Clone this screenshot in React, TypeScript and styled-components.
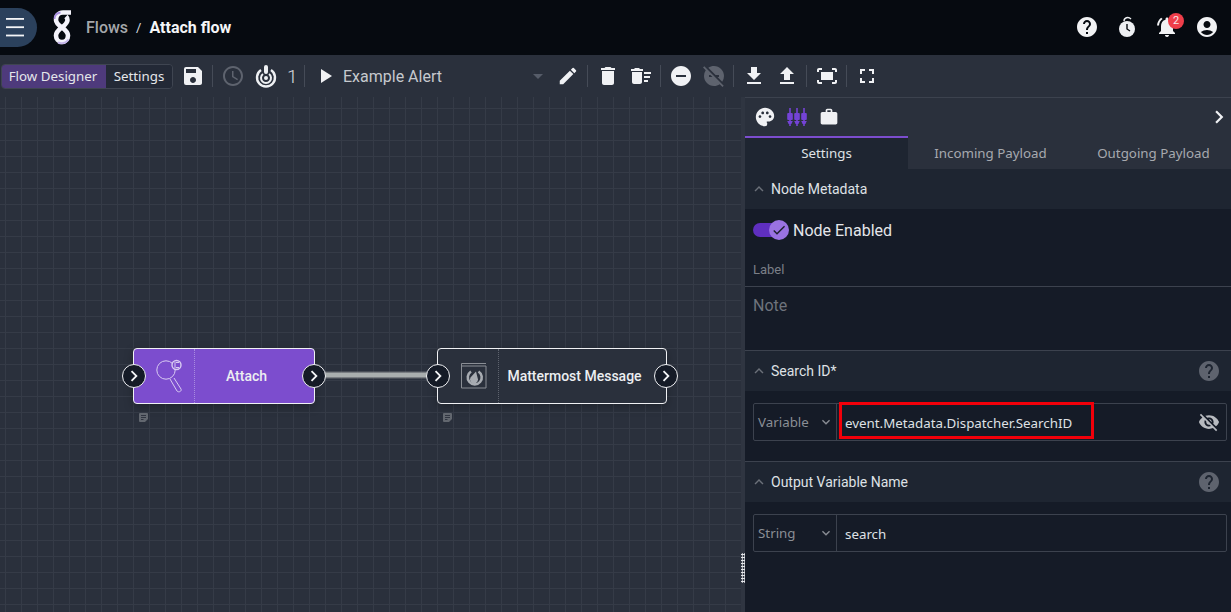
import styled, { createGlobalStyle } from "styled-components";
import {
  MdAccessTime,
  MdAccountCircle,
  MdDelete,
  MdDeleteSweep,
  MdEdit,
  MdFileDownload,
  MdFileUpload,
  MdFitScreen,
  MdFullscreen,
  MdHelp,
  MdKeyboardArrowDown,
  MdKeyboardArrowUp,
  MdNotificationsActive,
  MdPalette,
  MdPlayArrow,
  MdRemoveCircle,
  MdSave,
  MdVisibilityOff,
  MdWork,
  MdChevronRight,
  MdArrowDropDown,
  MdDoNotDisturbOff,
  MdCheck,
} from "react-icons/md";

const GlobalStyle = createGlobalStyle`
  html, body {
    margin: 0;
    height: 100%;
    background: #151b27;
    overflow: hidden;
  }
  body {
    font-family: "Roboto", "Liberation Sans", sans-serif;
    color: #eef0f3;
  }
  #root {
    height: 100%;
  }
`;

function MenuIcon() {
  return (
    <svg width="18" height="19" viewBox="0 0 18 19" fill="#f4f5f7">
      <rect y="0" width="18" height="1.8" />
      <rect y="8.3" width="18" height="1.8" />
      <rect y="16.6" width="18" height="1.8" />
    </svg>
  );
}

function Logo() {
  return (
    <svg width="20" height="36" viewBox="0 0 20 36" fill="none">
      <path
        d="M19 3.5h-8C6.5 3.5 4 7 4 11c0 6.5 12 8.500 12 15.500 0 3.500-2.500 6.500-6 6.500s-6-3-6-6.500C4 19.500 15.500 17.500 15.500 11c0-1.500-.5-2.500-1.500-3.500"
        stroke="#f4f3fb"
        strokeWidth="4.6"
      />
      <path d="M2.500 10c0-3.500 2.500-6 6-6.500" stroke="#a991e0" strokeWidth="1.800" />
      <path d="M6 33.500c4 1.500 8 .5 10.500-3" stroke="#c4b5ea" strokeWidth="2" />
    </svg>
  );
}

function TimerIcon() {
  return (
    <svg width="20" height="24" viewBox="0 0 20 24" fill="none">
      <path d="M7 6c0-3 4-5 7-2" stroke="#eef0f3" strokeWidth="1.4" />
      <circle cx="10" cy="14" r="8" fill="#eef0f3" />
      <path d="M10 9v5l3 2" stroke="#060a10" strokeWidth="1.4" />
    </svg>
  );
}

function TargetIcon() {
  return (
    <svg width="22" height="24" viewBox="0 0 22 24" fill="none">
      <path d="M6 6a9 9 0 1 0 10 0" stroke="#eef0f3" strokeWidth="2.4" />
      <path d="M8 10a5 5 0 1 0 6 0" stroke="#eef0f3" strokeWidth="2" />
      <circle cx="11" cy="14" r="2" fill="#eef0f3" />
      <rect x="9" y="1" width="4" height="9" rx="2" fill="#eef0f3" />
    </svg>
  );
}

function SlidersIcon() {
  return (
    <svg width="20" height="20" viewBox="0 0 20 20" fill="#7443d6">
      {[3, 10, 17].map((x) => (
        <g key={x}>
          <rect x={x - 0.8} y="1" width="1.6" height="18" />
          <rect x={x - 2.8} y="6" width="5.6" height="7" rx="1" />
          <path d={`M${x - 2.8} 14h5.6l-1.4 3h-2.8z`} />
        </g>
      ))}
    </svg>
  );
}

function AttachIcon() {
  return (
    <svg width="28" height="34" viewBox="0 0 28 34" fill="none" stroke="#d9ccf2" strokeWidth="1">
      <circle cx="10" cy="11" r="9.2" />
      <path d="M14 20l7 12c2 2 5 0 4-2l-7-11" />
      <circle cx="20.5" cy="6" r="4.5" fill="#7c4dce" strokeWidth="1.4" />
      <path d="M19 3v6M23 3.5h-3M23 8.5h-3" />
    </svg>
  );
}

function MattermostIcon() {
  return (
    <svg width="26" height="26" viewBox="0 0 26 26" fill="none">
      <path d="M25 .5H.5V25H25V3M1 3h24" stroke="#8a8e95" />
      <path d="M10 8.5a7 7 0 1 0 7.5 0" stroke="#a8acb2" strokeWidth="2.6" />
      <path d="M9.5 14.5a4 4 0 1 0 7 0L15 8.5z" fill="#a8acb2" />
    </svg>
  );
}

function NoteIcon() {
  return (
    <svg width="9" height="9" viewBox="0 0 9 9">
      <path d="M1 0h7a1 1 0 0 1 1 1v5L6 9H1a1 1 0 0 1-1-1V1a1 1 0 0 1 1-1z" fill="#62676f" />
      <path d="M2 2.500h5M2 4.500h5M2 6.500h2.500" stroke="#2a303c" strokeWidth="0.9" />
    </svg>
  );
}

function Port({ side }: { side: "left" | "right" }) {
  return (
    <PortDot $side={side}>
      <MdChevronRight size={22} />
    </PortDot>
  );
}

function Section({ title, help }: { title: string; help?: boolean }) {
  return (
    <SectionHeader>
      <MdKeyboardArrowUp size={18} color="#6b7079" />
      <SectionTitle>{title}</SectionTitle>
      {help && <HelpIcon size={24} />}
    </SectionHeader>
  );
}

export default function App() {
  return (
    <Page>
      <GlobalStyle />
      <TopBar>
        <MenuPill>
          <MenuIcon />
        </MenuPill>
        <LogoBox>
          <Logo />
        </LogoBox>
        <Crumb>Flows</Crumb>
        <CrumbSep>/</CrumbSep>
        <CrumbCurrent>Attach flow</CrumbCurrent>
        <TopActions>
          <TopIcon>
            <MdHelp size={24} />
          </TopIcon>
          <TopIcon>
            <TimerIcon />
          </TopIcon>
          <TopIcon>
            <MdNotificationsActive size={24} />
            <Badge>2</Badge>
          </TopIcon>
          <TopIcon>
            <MdAccountCircle size={24} />
          </TopIcon>
        </TopActions>
      </TopBar>

      <Toolbar>
        <ModeGroup>
          <ModeButton $active>Flow Designer</ModeButton>
          <ModeButton>Settings</ModeButton>
        </ModeGroup>
        <SaveButton>
          <MdSave size={24} />
        </SaveButton>
        <ToolSep />
        <ToolButton $dim>
          <MdAccessTime size={24} />
        </ToolButton>
        <ToolButton>
          <TargetIcon />
        </ToolButton>
        <RunCount>1</RunCount>
        <ToolSep />
        <FlowSelect>
          <MdPlayArrow size={24} />
          <FlowName>Example Alert</FlowName>
          <MdArrowDropDown size={24} color="#565c69" />
        </FlowSelect>
        <ToolButton>
          <MdEdit size={22} />
        </ToolButton>
        <ToolSep />
        <ToolButton>
          <MdDelete size={24} />
        </ToolButton>
        <ToolButton>
          <MdDeleteSweep size={24} />
        </ToolButton>
        <ToolSep />
        <ToolButton>
          <MdRemoveCircle size={24} />
        </ToolButton>
        <ToolButton $dim>
          <MdDoNotDisturbOff size={24} />
        </ToolButton>
        <ToolSep />
        <ToolButton>
          <MdFileDownload size={24} />
        </ToolButton>
        <ToolButton>
          <MdFileUpload size={24} />
        </ToolButton>
        <ToolSep />
        <ToolButton>
          <MdFitScreen size={24} />
        </ToolButton>
        <ToolSep />
        <ToolButton>
          <MdFullscreen size={24} />
        </ToolButton>
      </Toolbar>

      <Workspace>
        <Canvas>
          <Edge viewBox="0 0 102 12" width="102" height="12">
            <rect x="0" y="2" width="102" height="8" fill="#6c7176" opacity="0.45" />
            <rect x="0" y="3.5" width="102" height="5" fill="#a9aeae" />
          </Edge>
          <Node $x={133} $w={182} $purple>
            <NodeIcon $purple>
              <AttachIcon />
            </NodeIcon>
            <NodeLabel>Attach</NodeLabel>
            <Port side="left" />
            <Port side="right" />
            <NoteMark>
              <NoteIcon />
            </NoteMark>
          </Node>
          <Node $x={437} $w={230}>
            <NodeIcon>
              <MattermostIcon />
            </NodeIcon>
            <NodeLabel>Mattermost Message</NodeLabel>
            <Port side="left" />
            <Port side="right" />
            <NoteMark>
              <NoteIcon />
            </NoteMark>
          </Node>
        </Canvas>

        <Splitter>
          <Grip />
        </Splitter>

        <Panel>
          <PanelIcons>
            <PanelIcon>
              <MdPalette size={22} />
            </PanelIcon>
            <PanelIcon>
              <SlidersIcon />
            </PanelIcon>
            <PanelIcon>
              <MdWork size={20} />
            </PanelIcon>
            <PanelCollapse>
              <MdChevronRight size={26} />
            </PanelCollapse>
          </PanelIcons>
          <Tabs>
            <Tab $active>Settings</Tab>
            <Tab>Incoming Payload</Tab>
            <Tab>Outgoing Payload</Tab>
          </Tabs>

          <Section title="Node Metadata" />
          <EnabledRow>
            <Toggle>
              <ToggleKnob>
                <MdCheck size={16} />
              </ToggleKnob>
            </Toggle>
            <EnabledText>Node Enabled</EnabledText>
          </EnabledRow>
          <LabelField>Label</LabelField>
          <NoteField>Note</NoteField>

          <Section title="Search ID*" help />
          <SectionBody>
            <InputRow>
              <TypeSelect>
                Variable
                <MdKeyboardArrowDown size={16} />
              </TypeSelect>
              <ValueText>event.Metadata.Dispatcher.SearchID</ValueText>
              <Highlight />
              <EyeIcon>
                <MdVisibilityOff size={22} />
              </EyeIcon>
            </InputRow>
          </SectionBody>

          <Section title="Output Variable Name" help />
          <SectionBody>
            <InputRow>
              <TypeSelect>
                String
                <MdKeyboardArrowDown size={16} />
              </TypeSelect>
              <ValueText>search</ValueText>
            </InputRow>
          </SectionBody>
        </Panel>
      </Workspace>
    </Page>
  );
}

const Page = styled.div`
  display: flex;
  flex-direction: column;
  height: 612px;
  width: 1231px;
  overflow: hidden;
`;

const TopBar = styled.header`
  height: 55px;
  flex: none;
  box-sizing: border-box;
  padding-bottom: 1px;
  display: flex;
  align-items: center;
  background: #060a10;
`;

const MenuPill = styled.div`
  width: 37px;
  height: 39px;
  border-radius: 0 20px 20px 0;
  background: #2b415c;
  display: flex;
  align-items: center;
  justify-content: flex-start;
  padding-left: 6px;
  box-sizing: border-box;
`;

const LogoBox = styled.div`
  width: 20px;
  height: 36px;
  margin-left: 15px;
  margin-right: 14px;
`;

const Crumb = styled.span`
  font-size: 16px;
  color: #a4a7ab;
  font-weight: 500;
`;

const CrumbSep = styled.span`
  font-size: 13px;
  margin: 0 8px;
  color: #dfe1e4;
`;

const CrumbCurrent = styled.span`
  font-size: 16px;
  font-weight: 700;
  color: #f4f5f7;
`;

const TopActions = styled.div`
  margin-left: auto;
  margin-right: 4px;
  display: flex;
`;

const TopIcon = styled.div`
  position: relative;
  width: 40px;
  height: 40px;
  display: flex;
  align-items: center;
  justify-content: center;
  color: #f1f2f4;
`;

const Badge = styled.span`
  position: absolute;
  top: 6px;
  right: 3px;
  width: 16px;
  height: 16px;
  border-radius: 50%;
  background: #ef3e4a;
  color: #f8e8ea;
  font-size: 11px;
  line-height: 16px;
  text-align: center;
`;

const Toolbar = styled.div`
  height: 42px;
  flex: none;
  box-sizing: border-box;
  padding-left: 1px;
  display: flex;
  align-items: center;
  background: #2a303c;
`;

const ModeGroup = styled.div`
  display: flex;
  width: 172px;
  height: 25px;
  box-sizing: border-box;
  border: 1px solid #3f4551;
  border-radius: 4px;
  overflow: hidden;
  flex: none;
`;

const ModeButton = styled.div<{ $active?: boolean }>`
  flex: ${(p) => (p.$active ? "0 0 104px" : "1")};
  box-sizing: border-box;
  padding-right: ${(p) => (p.$active ? "2px" : "0")};
  background: ${(p) => (p.$active ? "#4e3a7c" : "#232936")};
  color: #e4e6ea;
  font-family: "Noto Sans", sans-serif;
  font-size: 13.33px;
  line-height: 23px;
  text-align: center;
`;

const ToolButton = styled.div<{ $dim?: boolean }>`
  width: 33px;
  height: 33px;
  flex: none;
  display: flex;
  align-items: center;
  justify-content: center;
  color: ${(p) => (p.$dim ? "#5e636e" : "#f0f1f4")};
`;

const SaveButton = styled(ToolButton)`
  margin-left: 3px;
`;

const ToolSep = styled.div`
  width: 1px;
  height: 22px;
  margin: 0 3px;
  flex: none;
  background: #454b57;
`;

const RunCount = styled.span`
  width: 19px;
  box-sizing: border-box;
  padding-left: 5px;
  font-size: 19px;
  color: #d9dbdf;
  font-weight: 300;
`;

const FlowSelect = styled.div`
  width: 243px;
  flex: none;
  display: flex;
  align-items: center;
  color: #f0f1f4;
  padding: 0 1px 0 5px;
  box-sizing: border-box;
`;

const FlowName = styled.span`
  flex: 1;
  margin-left: 6px;
  font-size: 16px;
  color: #c6c9ce;
`;

const Workspace = styled.main`
  flex: 1;
  display: flex;
  min-height: 0;
`;

const Canvas = styled.section`
  position: relative;
  flex: 1;
  background-color: #2a303c;
  background-image: linear-gradient(#353b47 1px, transparent 1px),
    linear-gradient(90deg, #353b47 1px, transparent 1px);
  background-size: 16px 16px;
  background-position: 5px 11px;
`;

const Edge = styled.svg`
  position: absolute;
  left: 325px;
  top: 272px;
`;

const Node = styled.div<{ $x: number; $w: number; $purple?: boolean }>`
  position: absolute;
  top: 251px;
  left: ${(p) => p.$x}px;
  width: ${(p) => p.$w}px;
  height: 56px;
  box-sizing: border-box;
  display: flex;
  border: 1px solid #f0f1f4;
  border-radius: 4px;
  background: ${(p) => (p.$purple ? "#7c4dce" : "#2a303c")};
  box-shadow: 0 3px 10px rgba(0, 0, 0, 0.25);
`;

const NodeIcon = styled.div<{ $purple?: boolean }>`
  width: 61px;
  flex: none;
  box-sizing: border-box;
  padding-left: 12px;
  display: flex;
  align-items: center;
  justify-content: center;
  border-right: 1px dotted ${(p) => (p.$purple ? "#a88be0" : "#5e636e")};
`;

const NodeLabel = styled.div`
  flex: 1;
  padding-right: 16px;
  font-size: 14px;
  font-weight: 500;
  color: #eceef1;
  line-height: 54px;
  text-align: center;
`;

const PortDot = styled.div<{ $side: "left" | "right" }>`
  position: absolute;
  top: 15px;
  ${(p) => p.$side}: -12px;
  width: 24px;
  height: 24px;
  box-sizing: border-box;
  border: 1px solid #f0f1f4;
  border-radius: 50%;
  background: #151b27;
  color: #f4f5f7;
  display: flex;
  align-items: center;
  justify-content: center;
`;

const NoteMark = styled.div`
  position: absolute;
  left: 5px;
  top: 64px;
  display: flex;
`;

const Splitter = styled.div`
  position: relative;
  width: 4px;
  flex: none;
  background: #2f3541;
`;

const Grip = styled.div`
  position: absolute;
  left: 0;
  top: 456px;
  width: 4px;
  height: 30px;
  background-image: radial-gradient(#e4e6ea 1px, transparent 1px);
  background-size: 2.5px 3px;
`;

const Panel = styled.aside`
  width: 486px;
  flex: none;
  background: #151b27;
  border-top: 1px solid #3c424e;
`;

const PanelIcons = styled.div`
  height: 38px;
  display: flex;
  align-items: center;
  padding-left: 4px;
  background: #2a303c;
`;

const PanelIcon = styled.div`
  width: 32px;
  display: flex;
  justify-content: center;
  color: #f0f1f4;
`;

const PanelCollapse = styled.div`
  margin-left: auto;
  margin-right: -1px;
  display: flex;
  color: #f0f1f4;
`;

const Tabs = styled.div`
  display: flex;
  height: 33px;
  overflow: hidden;
  background: #2a303c;
`;

const Tab = styled.div<{ $active?: boolean }>`
  flex: 0 0 163px;
  box-sizing: border-box;
  padding-left: ${(p) => (p.$active ? "0" : "2px")};
  border-top: 2px solid ${(p) => (p.$active ? "#7c4dce" : "transparent")};
  background: ${(p) => (p.$active ? "#1e2531" : "transparent")};
  color: ${(p) => (p.$active ? "#dfe1e5" : "#a6a9af")};
  font-family: "Noto Sans", sans-serif;
  font-size: 13.33px;
  line-height: 30px;
  text-align: center;
`;

const SectionHeader = styled.div`
  height: 40px;
  display: flex;
  align-items: center;
  padding: 0 10px 0 5px;
  background: #1e2531;
`;

const SectionTitle = styled.span`
  flex: 1;
  margin-left: 3px;
  font-size: 14px;
  color: #dfe1e5;
`;

const HelpIcon = styled(MdHelp)`
  color: #5e636e;
`;

const EnabledRow = styled.div`
  height: 42px;
  display: flex;
  align-items: center;
  padding-left: 8px;
`;

const Toggle = styled.div`
  position: relative;
  width: 30px;
  height: 14px;
  border-radius: 7px;
  background: #5f2fc0;
`;

const ToggleKnob = styled.div`
  position: absolute;
  right: -6px;
  top: -3px;
  width: 20px;
  height: 20px;
  border-radius: 50%;
  background: #9a73e2;
  color: #1c1f2b;
  display: flex;
  align-items: center;
  justify-content: center;
`;

const EnabledText = styled.span`
  margin-left: 10px;
  font-size: 16px;
  color: #e4e6ea;
`;

const LabelField = styled.div`
  height: 36px;
  box-sizing: border-box;
  padding: 10px 0 0 8px;
  font-size: 13px;
  line-height: 18px;
  color: #7b7f87;
  border-bottom: 1px solid #3c424e;
`;

const NoteField = styled.div`
  height: 64px;
  box-sizing: border-box;
  padding: 9px 0 0 8px;
  font-size: 16px;
  color: #6e737c;
  border-bottom: 1px solid #3c424e;
`;

const SectionBody = styled.div`
  padding: 12px 4px 20px 8px;
  border-bottom: 1px solid #3c424e;
  &:last-child {
    border-bottom: 0;
  }
`;

const InputRow = styled.div`
  position: relative;
  display: flex;
  align-items: center;
  height: 38px;
  box-sizing: border-box;
  border: 1px solid #3c424e;
  border-radius: 2px;
`;

const TypeSelect = styled.div`
  width: 83px;
  height: 100%;
  flex: none;
  box-sizing: border-box;
  padding: 0 2px 0 4px;
  display: flex;
  align-items: center;
  justify-content: space-between;
  border-right: 1px solid #3c424e;
  font-family: "Noto Sans", sans-serif;
  font-size: 13.33px;
  color: #8a8e95;
`;

const ValueText = styled.span`
  margin-left: 8px;
  padding-top: 1px;
  font-family: "Noto Sans", sans-serif;
  font-size: 13.33px;
  color: #dfe1e5;
`;

const Highlight = styled.div`
  position: absolute;
  left: 85px;
  top: -2px;
  width: 255px;
  height: 37px;
  box-sizing: border-box;
  border: 3px solid #f2000a;
`;

const EyeIcon = styled.div`
  margin-left: auto;
  margin-right: 6px;
  display: flex;
  color: #b8bbc0;
`;
